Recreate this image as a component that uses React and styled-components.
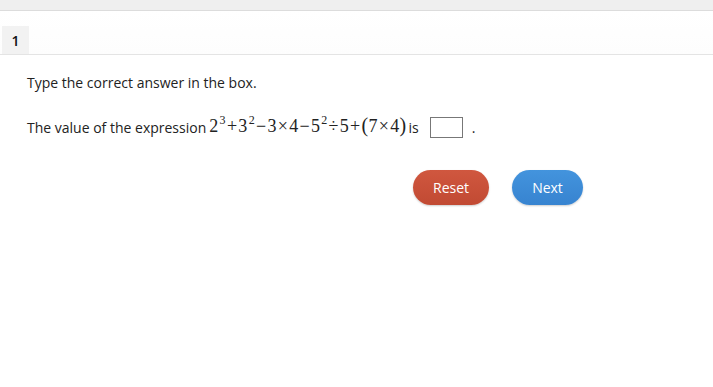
import React from 'react'
import styled, { createGlobalStyle } from 'styled-components'

const Global = createGlobalStyle`
  body {
    margin: 0;
    background: #fff;
    font-family: "Open Sans", "Liberation Sans", sans-serif;
    color: #222;
  }
`

const Page = styled.div`
  width: 713px;
  height: 387px;
  background: #fff;
  overflow: hidden;
`

const TopStrip = styled.div`
  height: 10px;
  background: #efefef;
  border-bottom: 1px solid #dcdcdc;
`

const TabBar = styled.div`
  height: 43px;
  display: flex;
  align-items: flex-end;
  padding-left: 2px;
  border-bottom: 1px solid #e4e4e4;
  background: linear-gradient(#fff, #fdfdfd);
`

const Tab = styled.div`
  width: 27px;
  height: 28px;
  background: #f2f2f2;
  display: flex;
  align-items: center;
  justify-content: center;
  font-size: 14px;
  font-weight: 600;
  color: #111;
`

const Body = styled.div`
  padding: 18px 0 0 27px;
  font-size: 14px;
`

const Instruction = styled.p`
  margin: 0;
  line-height: 20px;
`

const Question = styled.div`
  display: flex;
  align-items: center;
  margin-top: 21px;
  height: 26px;
`

const Math = styled.span`
  font-family: "Liberation Serif", "DejaVu Serif", serif;
  font-size: 18px;
  margin: 0 2px 0 3px;
  position: relative;
  top: -2px;
  letter-spacing: 0.3px;
`

const Sup = styled.sup`
  font-size: 12px;
  vertical-align: 8px;
  line-height: 0;
  margin-left: 1px;
`

const Op = styled.span`
  margin: 0 1px;
`

const Paren = styled.span`
  font-size: 20px;
`

const AnswerBox = styled.span`
  display: inline-block;
  width: 31px;
  height: 19px;
  border: 1px solid #777;
  margin-left: 11px;
  margin-right: 9px;
`

const Actions = styled.div`
  display: flex;
  gap: 23px;
  margin-top: 30px;
  padding-left: 386px;
`

const Button = styled.button`
  height: 35px;
  width: ${p => p.$w}px;
  border: none;
  border-radius: 18px;
  font-family: "Open Sans", "Liberation Sans", sans-serif;
  font-size: 14px;
  font-weight: 500;
  color: #fff;
  background: ${p => p.$bg};
  box-shadow: 0 1px 2px rgba(0, 0, 0, 0.2);
  cursor: pointer;
`

export default function App() {
  return (
    <Page>
      <Global />
      <TopStrip />
      <TabBar>
        <Tab>1</Tab>
      </TabBar>
      <Body>
        <Instruction>Type the correct answer in the box.</Instruction>
        <Question>
          The value of the expression
          <Math>
            2<Sup>3</Sup><Op>+</Op>3<Sup>2</Sup><Op>−</Op>3<Op>×</Op>4<Op>−</Op>5<Sup>2</Sup><Op>÷</Op>5<Op>+</Op><Paren>(</Paren>7<Op>×</Op>4<Paren>)</Paren>
          </Math>
          is
          <AnswerBox />
          .
        </Question>
        <Actions>
          <Button $w={76} $bg="linear-gradient(#d0573f, #c14a33)">Reset</Button>
          <Button $w={71} $bg="linear-gradient(#4394dd, #3783d0)">Next</Button>
        </Actions>
      </Body>
    </Page>
  )
}
